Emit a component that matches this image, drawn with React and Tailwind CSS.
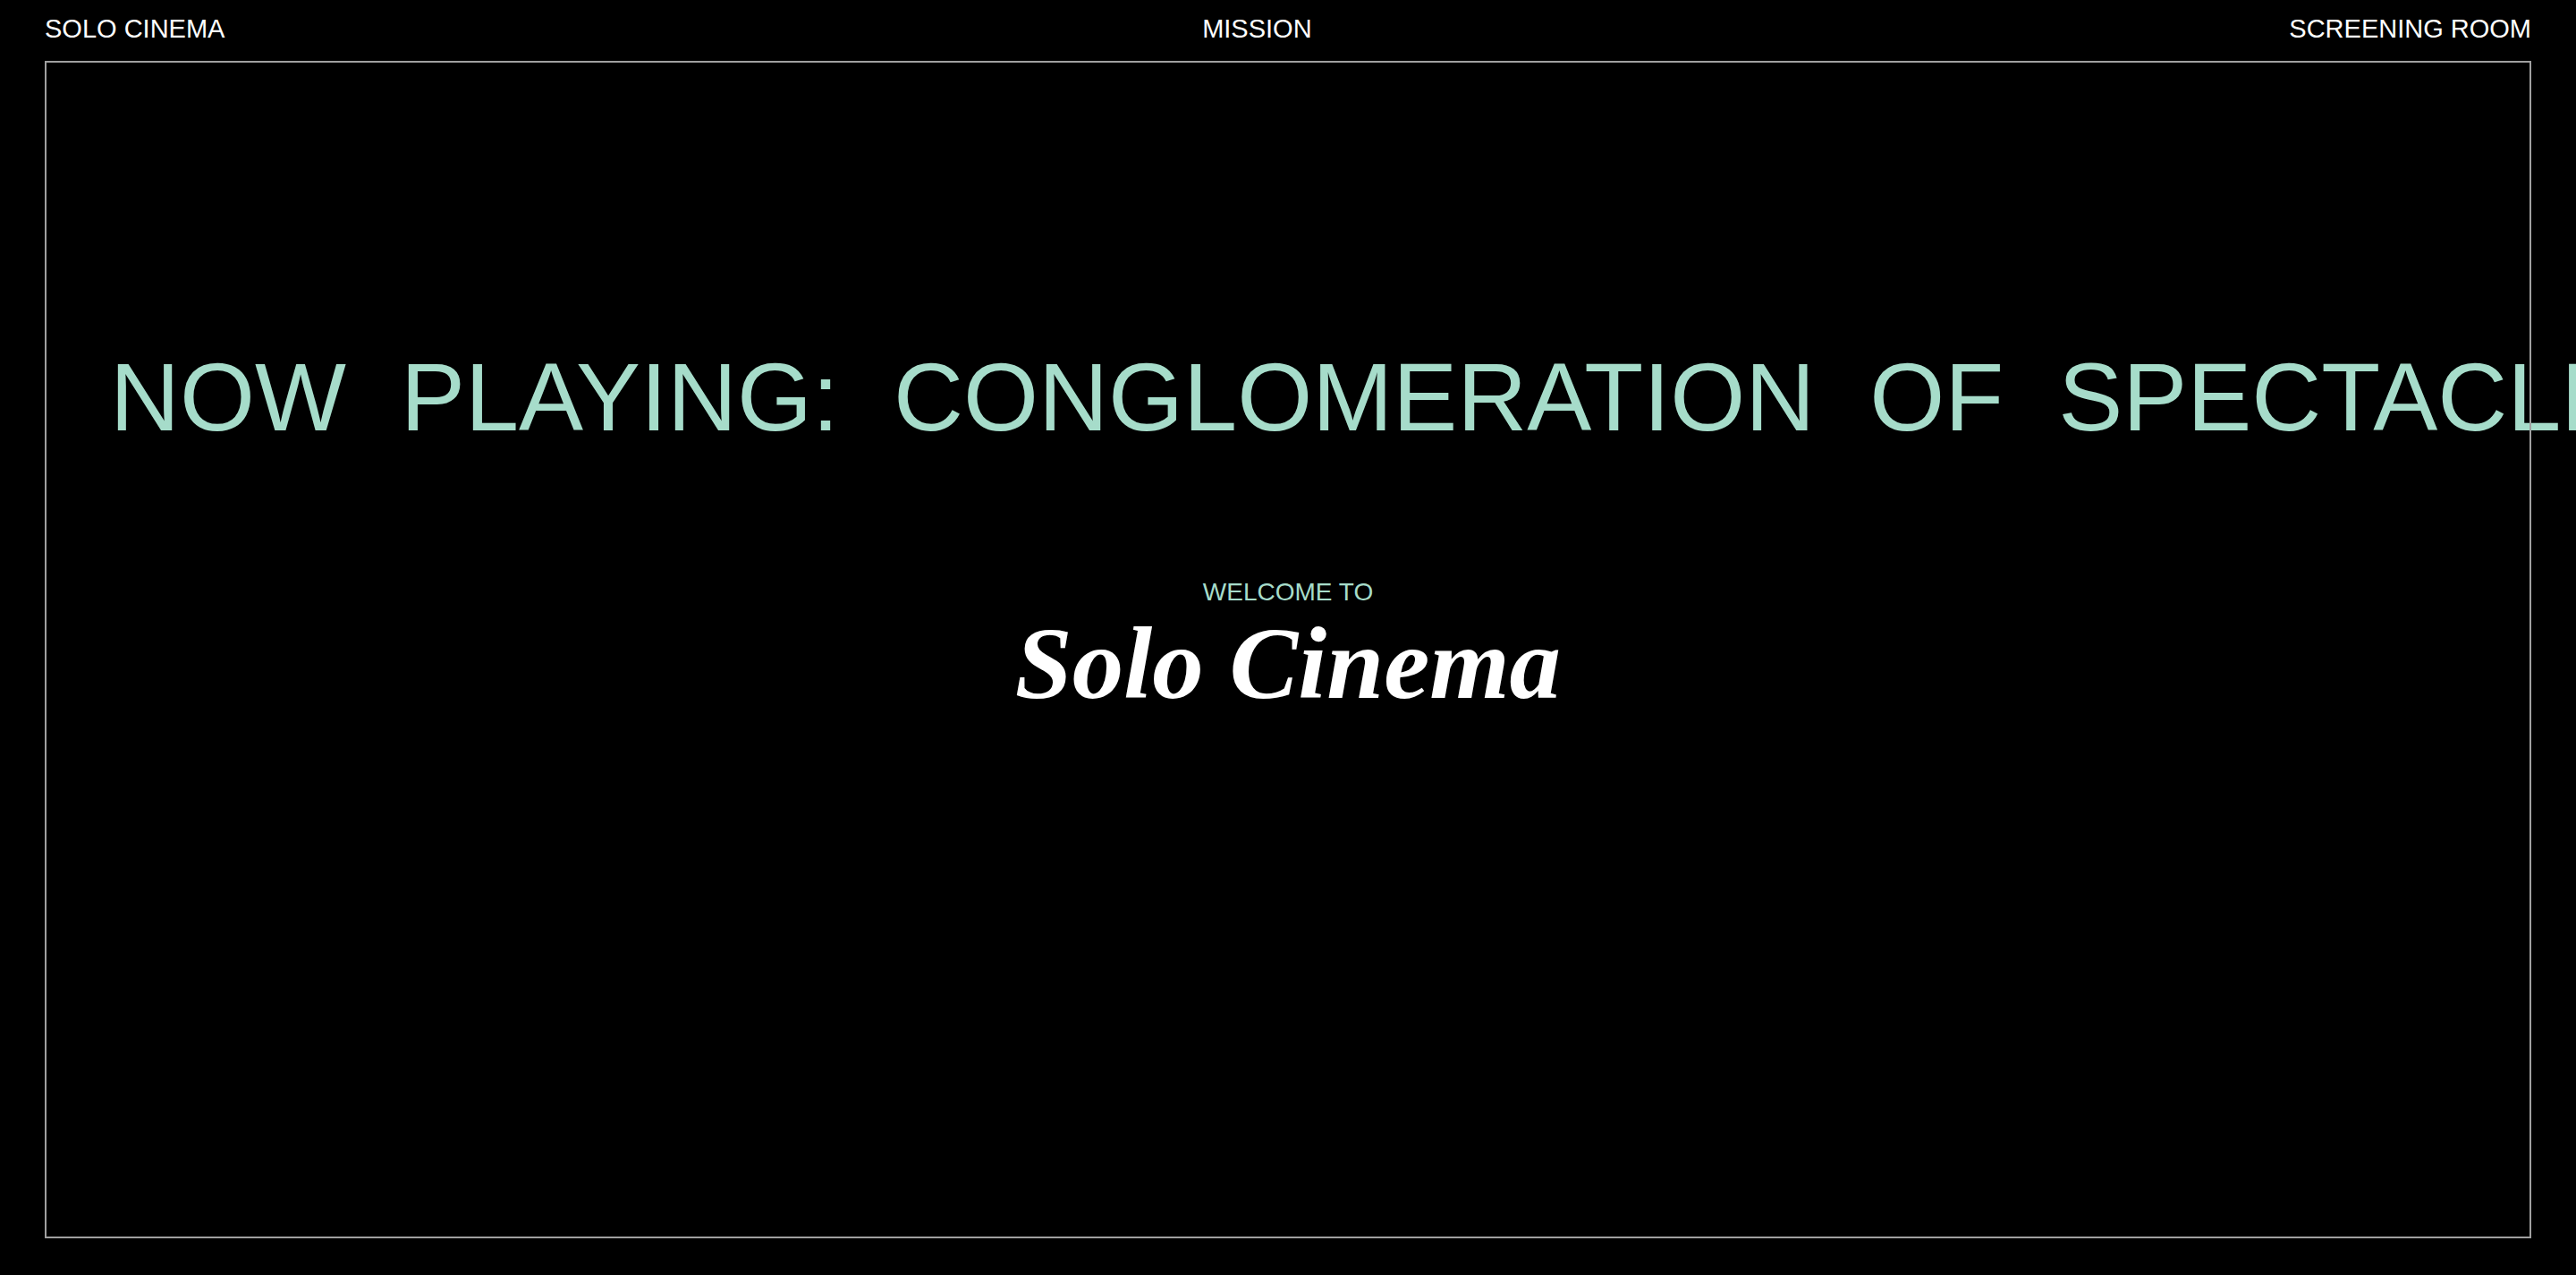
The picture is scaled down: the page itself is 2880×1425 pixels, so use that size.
import React from 'react';

// Solo Cinema landing: top nav, framed screen with marquee + title

const NAV = ['SOLO CINEMA', 'MISSION', 'SCREENING ROOM'];

const Marquee = ({ text }) => (
    <div
        className="whitespace-nowrap leading-none text-[108px] text-[#a6dcca] pl-[73px] [word-spacing:31px]"
        style={{ fontFamily: '"Liberation Sans", Arial, sans-serif' }}
    >
        {text}
    </div>
);

const App = () => {
    return (
        <div
            className="w-full h-[1425px] bg-black overflow-hidden flex flex-col px-[50px]"
            style={{ fontFamily: '"Liberation Sans", Arial, sans-serif' }}
        >
            <nav className="h-[68px] pt-[16px] flex justify-between items-start text-white text-[29px] leading-[33px]">
                {NAV.map(item => (
                    <a key={item} href="#" className="hover:text-[#a6dcca]">
                        {item}
                    </a>
                ))}
            </nav>

            <main className="relative h-[1316px] flex flex-col">
                <div className="pt-[322px]">
                    <Marquee text="NOW PLAYING: CONGLOMERATION OF SPECTACLE NOW PLAYING: CONGLOMERATION OF SPECTACLE" />
                </div>

                <div className="mt-[150px] flex flex-col items-center">
                    <p className="text-[28px] leading-none text-[#a6dcca]">WELCOME TO</p>
                    <h1
                        className="mt-[8px] text-[115px] leading-none font-bold italic text-white"
                        style={{ fontFamily: '"Liberation Serif", "Times New Roman", serif' }}
                    >
                        Solo Cinema
                    </h1>
                </div>

                {/* frame sits above the marquee */}
                <div className="absolute inset-0 border-2 border-[#a0a0a0] pointer-events-none" />
            </main>
        </div>
    );
};

export default App;
